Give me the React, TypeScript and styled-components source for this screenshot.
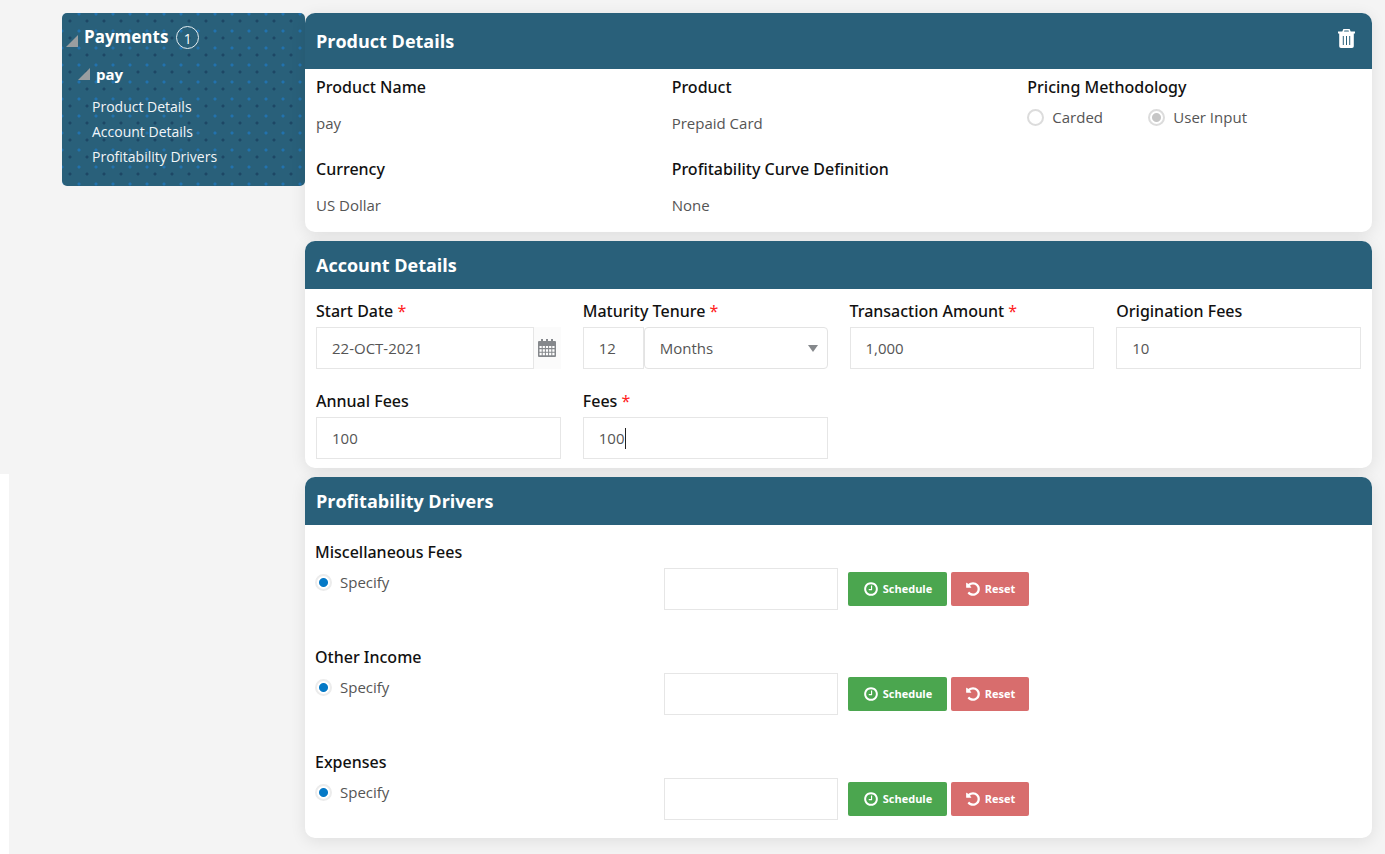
import React, { useId } from "react";
import styled, { createGlobalStyle, css } from "styled-components";

const teal = "#29607a";

const GlobalStyle = createGlobalStyle`
  *, *::before, *::after { box-sizing: border-box; }
  body {
    margin: 0;
    background: #f4f4f4;
    color: #111;
    font-family: "Open Sans", "Noto Sans", sans-serif;
    font-size: 15px;
    line-height: 24px;
  }
  input, select, button { font: inherit; }
`;

const Page = styled.div`
  display: flex;
  align-items: flex-start;
  min-height: 100vh;
  padding: 13px 13px 16px 62px;
  background: linear-gradient(#fff, #fff) 0 474px / 9px 100% no-repeat #f4f4f4;
`;

const Sidebar = styled.nav`
  flex: 0 0 243px;
  padding: 12px 4px 17px;
  border-radius: 5px;
  color: #fff;
  background:
    radial-gradient(circle at 8px 8px, #1d4765 1px, transparent 2px) 0 0 / 17px 17px,
    radial-gradient(circle at 8px 8px, #2272ae 1px, transparent 2px) 9px 10px / 17px 17px,
    ${teal};
`;

const TreeNode = styled.button<{ $nested?: boolean }>`
  display: flex;
  align-items: center;
  height: 24px;
  margin: 0 0 ${(p) => (p.$nested ? "8px" : "13px")} ${(p) => (p.$nested ? "12px" : "0")};
  padding: 0;
  border: 0;
  background: none;
  color: inherit;
  font-size: ${(p) => (p.$nested ? "15px" : "17px")};
  font-weight: 700;
  line-height: 24px;
`;

const Caret = styled.svg<{ $raised?: boolean }>`
  width: 12px;
  height: 12px;
  margin: ${(p) => (p.$raised ? "0" : "8px")} 6px 0 0;
`;

const CountBadge = styled.span`
  display: grid;
  place-items: center;
  width: 23px;
  height: 23px;
  margin-left: 8px;
  border: 1px solid #e4edf1;
  border-radius: 50%;
  font-size: 14px;
  font-weight: 400;
`;

const SideLinks = styled.ul`
  margin: 0;
  padding: 0 0 0 26px;
  list-style: none;
`;

const SideLink = styled.a`
  color: #f2f6f8;
  font-size: 14px;
  line-height: 25px;
  text-decoration: none;
`;

const Main = styled.main`
  display: flex;
  flex: 1;
  flex-direction: column;
  gap: 9px;
  min-width: 0;
`;

const Card = styled.section`
  border-radius: 10px;
  background: #fff;
  box-shadow: 0 3px 16px rgba(0, 0, 0, 0.09);
`;

const CardHeader = styled.header<{ $tall?: boolean }>`
  display: flex;
  align-items: center;
  justify-content: space-between;
  height: ${(p) => (p.$tall ? "56px" : "48px")};
  padding: 0 17px 0 11px;
  border-radius: 10px 10px 0 0;
  background: ${teal};
  color: #fff;
`;

const CardTitle = styled.h2`
  margin: 0;
  font-size: 18px;
  font-weight: 700;
  line-height: 24px;
`;

const IconButton = styled.button<{ $muted?: boolean }>`
  display: grid;
  place-items: center;
  padding: 0;
  border: 0;
  background: none;
  color: #fff;
  ${(p) =>
    p.$muted &&
    css`
      flex: 0 0 27px;
      background: #fbfbfb;
      color: #85888c;
    `}
`;

const DetailGrid = styled.div<{ $columns: number }>`
  display: grid;
  grid-template-columns: repeat(${(p) => p.$columns}, minmax(0, 1fr));
  row-gap: ${(p) => (p.$columns === 3 ? "22px" : "20px")};
  padding: ${(p) => (p.$columns === 3 ? "6px 0 15px" : "10px 0 9px")};
`;

const Cell = styled.div<{ $gap: number }>`
  display: flex;
  flex-direction: column;
  gap: ${(p) => p.$gap}px;
  padding: 0 11px;
`;

const labelText = css`
  color: #111;
  font-size: 16px;
  font-weight: 500;
  line-height: 24px;
  font-family: "Noto Sans", "Open Sans", sans-serif;
`;

const Term = styled.span`
  ${labelText}
`;

const FieldLabel = styled.label`
  ${labelText}
`;

const Required = styled.span`
  color: #f22;
  font-weight: 400;
`;

const Value = styled.span`
  color: #555;
`;

const RadioRow = styled.div`
  display: flex;
`;

const RadioOption = styled.label<{ $wide?: boolean }>`
  display: flex;
  align-items: center;
  gap: 8px;
  width: ${(p) => (p.$wide ? "121px" : "auto")};
  color: #555;
`;

const Radio = styled.input.attrs({ type: "radio" })<{ $dot: string; $ring: string }>`
  flex: none;
  width: 17px;
  height: 17px;
  margin: 0;
  appearance: none;
  border: 2px solid ${(p) => p.$ring};
  border-radius: 50%;
  background: #fff;
  &:checked {
    background: radial-gradient(circle, ${(p) => p.$dot} 4px, #fff 5px);
  }
`;

const ControlRow = styled.div`
  position: relative;
  display: flex;
  height: 42px;
`;

const TextInput = styled.input<{ $width?: string }>`
  flex: ${(p) => (p.$width ? `0 0 ${p.$width}` : "1")};
  min-width: 0;
  height: 42px;
  padding: 0 15px;
  border: 1px solid #e6e6e6;
  background: #fff;
  color: #555;
  outline: none;
`;

const SelectWrap = styled.div`
  position: relative;
  flex: 1;
  &::after {
    content: "";
    position: absolute;
    top: 18px;
    right: 10px;
    border: 5px solid transparent;
    border-top: 7px solid #85888c;
    border-bottom: 0;
    pointer-events: none;
  }
`;

const Select = styled.select`
  width: 100%;
  height: 42px;
  padding: 0 15px;
  appearance: none;
  border: 1px solid #e3e3e3;
  border-radius: 4px;
  background: #fff;
  color: #555;
`;

const TextCursor = styled.span`
  position: absolute;
  top: 11px;
  left: 42px;
  width: 1px;
  height: 21px;
  background: #222;
`;

const DriverList = styled.div`
  display: flex;
  flex-direction: column;
  gap: 35px;
  padding: 15px 11px 18px 10px;
`;

const Driver = styled.div`
  display: flex;
  flex-direction: column;
  gap: 4px;
`;

const DriverRow = styled.div`
  display: grid;
  grid-template-columns: 2fr 1fr 3fr;
  align-items: start;
  height: 42px;
`;

const DriverChoice = styled.div`
  padding-top: 2px;
`;

const Actions = styled.div`
  display: flex;
  gap: 4px;
  padding: 4px 0 0 10px;
`;

const ActionButton = styled.button<{ $tone: "green" | "red" }>`
  display: flex;
  align-items: center;
  justify-content: center;
  gap: 4px;
  width: ${(p) => (p.$tone === "green" ? "99px" : "78px")};
  height: 34px;
  padding: 0;
  border: 0;
  border-radius: 2px;
  background: ${(p) => (p.$tone === "green" ? "#4ba64f" : "#d86d6d")};
  color: #fff;
  font-size: 11px;
  font-weight: 700;
`;

const ClockIcon = () => (
  <svg width="16" height="16" viewBox="0 0 1792 1792" fill="currentColor" aria-hidden="true">
    <path d="M1024 544v448q0 14-9 23t-23 9h-320q-14 0-23-9t-9-23v-64q0-14 9-23t23-9h224v-352q0-14 9-23t23-9h64q14 0 23 9t9 23zm416 352q0-148-73-273t-198-198-273-73-273 73-198 198-73 273 73 273 198 198 273 73 273-73 198-198 73-273zm224 0q0 209-103 385.5t-279.5 279.5-385.5 103-385.5-103-279.5-279.5-103-385.5 103-385.5 279.5-279.5 385.5-103 385.5 103 279.5 279.5 103 385.5z" />
  </svg>
);

const UndoIcon = () => (
  <svg width="16" height="16" viewBox="0 0 1792 1792" fill="currentColor" aria-hidden="true">
    <path d="M1664 896q0 156-61 298t-164 245-245 164-298 61q-172 0-327-72.5t-264-204.5q-7-10-6.5-22.5t8.5-20.5l137-138q10-9 25-9 16 2 23 12 73 95 179 147t225 52q104 0 198.5-40.5t163.5-109.5 109.5-163.5 40.5-198.5-40.5-198.5-109.5-163.5-163.5-109.5-198.5-40.5q-98 0-188 35.5t-160 101.5l137 138q31 30 14 69-17 40-59 40h-448q-26 0-45-19t-19-45v-448q0-42 40-59 39-17 69 14l130 129q107-101 244.5-156.5t284.5-55.5q156 0 298 61t245 164 164 245 61 298z" />
  </svg>
);

const TrashIcon = () => (
  <svg width="17" height="25" viewBox="0 0 17 25" fill="currentColor" aria-hidden="true">
    <path
      fillRule="evenodd"
      d="M5.4 0h6.2l1.1 2.6H17v2h-1.2v12.6q0 1.8-1.8 1.8H3q-1.8 0-1.8-1.8V4.600H0v-2h4.300zM6.400 1.500l-.4 1.100h5l-.4-1.100zM4.800 7v9h1V7zm3.200 0v9h1V7zm3.200 0v9h1V7z"
    />
  </svg>
);

const CalendarIcon = () => (
  <svg width="18" height="18" viewBox="0 0 18 18" aria-hidden="true">
    <path fill="currentColor" d="M1 2h2V0h2v2h3V0h2v2h3V0h2v2h2q1 0 1 1v14q0 1-1 1H1q-1 0-1-1V3q0-1 1-1z" />
    <path
      fill="#fff"
      d="M1.500 7h2.200v2H1.500zM4.700 7h2.200v2H4.700zM7.900 7h2.200v2H7.900zM11.100 7h2.200v2h-2.200zM14.300 7h2.200v2h-2.200zM1.500 10.200h2.200v2.500H1.500zM4.700 10.200h2.200v2.500H4.700zM7.900 10.200h2.200v2.500H7.900zM11.100 10.200h2.200v2.500h-2.200zM14.300 10.200h2.200v2.500h-2.200zM1.500 13.800h2.200v2.500H1.500zM4.700 13.800h2.200v2.500H4.700zM7.900 13.800h2.200v2.500H7.900zM11.100 13.800h2.200v2.500h-2.200zM14.300 13.800h2.200v2.500h-2.200z"
    />
  </svg>
);

const TreeCaret = ({ raised }: { raised?: boolean }) => (
  <Caret $raised={raised} viewBox="0 0 12 12" aria-hidden="true">
    <path d="M12 0v12H0z" fill="#999da0" />
  </Caret>
);

function Detail({ term, value }: { term: string; value: string }) {
  return (
    <Cell $gap={12}>
      <Term>{term}</Term>
      <Value>{value}</Value>
    </Cell>
  );
}

function Field({
  label,
  required,
  value,
  width,
  children,
}: {
  label: string;
  required?: boolean;
  value: string;
  width?: string;
  children?: React.ReactNode;
}) {
  const id = useId();
  return (
    <Cell $gap={4}>
      <FieldLabel htmlFor={id}>
        {label} {required && <Required>*</Required>}
      </FieldLabel>
      <ControlRow>
        <TextInput id={id} defaultValue={value} $width={width} />
        {children}
      </ControlRow>
    </Cell>
  );
}

const drivers = ["Miscellaneous Fees", "Other Income", "Expenses"];

export default function App() {
  return (
    <>
      <GlobalStyle />
      <Page>
        <Sidebar>
          <TreeNode>
            <TreeCaret />
            Payments
            <CountBadge>1</CountBadge>
          </TreeNode>
          <TreeNode $nested>
            <TreeCaret raised />
            pay
          </TreeNode>
          <SideLinks>
            <li><SideLink href="#product">Product Details</SideLink></li>
            <li><SideLink href="#account">Account Details</SideLink></li>
            <li><SideLink href="#drivers">Profitability Drivers</SideLink></li>
          </SideLinks>
        </Sidebar>

        <Main>
          <Card id="product">
            <CardHeader $tall>
              <CardTitle>Product Details</CardTitle>
              <IconButton aria-label="Delete product"><TrashIcon /></IconButton>
            </CardHeader>
            <DetailGrid $columns={3}>
              <Detail term="Product Name" value="pay" />
              <Detail term="Product" value="Prepaid Card" />
              <Cell $gap={6}>
                <Term>Pricing Methodology</Term>
                <RadioRow>
                  <RadioOption $wide>
                    <Radio name="pricing" disabled $dot="#c6c6c6" $ring="#dcdcdc" />
                    Carded
                  </RadioOption>
                  <RadioOption>
                    <Radio name="pricing" disabled defaultChecked $dot="#c6c6c6" $ring="#dcdcdc" />
                    User Input
                  </RadioOption>
                </RadioRow>
              </Cell>
              <Detail term="Currency" value="US Dollar" />
              <Detail term="Profitability Curve Definition" value="None" />
            </DetailGrid>
          </Card>

          <Card id="account">
            <CardHeader>
              <CardTitle>Account Details</CardTitle>
            </CardHeader>
            <DetailGrid $columns={4}>
              <Field label="Start Date" required value="22-OCT-2021">
                <IconButton $muted aria-label="Choose date"><CalendarIcon /></IconButton>
              </Field>
              <Field label="Maturity Tenure" required value="12" width="61px">
                <SelectWrap>
                  <Select aria-label="Tenure unit" defaultValue="Months">
                    <option>Months</option>
                  </Select>
                </SelectWrap>
              </Field>
              <Field label="Transaction Amount" required value="1,000" />
              <Field label="Origination Fees" value="10" />
              <Field label="Annual Fees" value="100" />
              <Field label="Fees" required value="100">
                <TextCursor />
              </Field>
            </DetailGrid>
          </Card>

          <Card id="drivers">
            <CardHeader>
              <CardTitle>Profitability Drivers</CardTitle>
            </CardHeader>
            <DriverList>
              {drivers.map((name) => (
                <Driver key={name}>
                  <Term>{name}</Term>
                  <DriverRow>
                    <DriverChoice>
                      <RadioOption>
                        <Radio name={name} defaultChecked $dot="#0579c6" $ring="#ececec" />
                        Specify
                      </RadioOption>
                    </DriverChoice>
                    <TextInput aria-label={name} />
                    <Actions>
                      <ActionButton $tone="green"><ClockIcon />Schedule</ActionButton>
                      <ActionButton $tone="red"><UndoIcon />Reset</ActionButton>
                    </Actions>
                  </DriverRow>
                </Driver>
              ))}
            </DriverList>
          </Card>
        </Main>
      </Page>
    </>
  );
}
